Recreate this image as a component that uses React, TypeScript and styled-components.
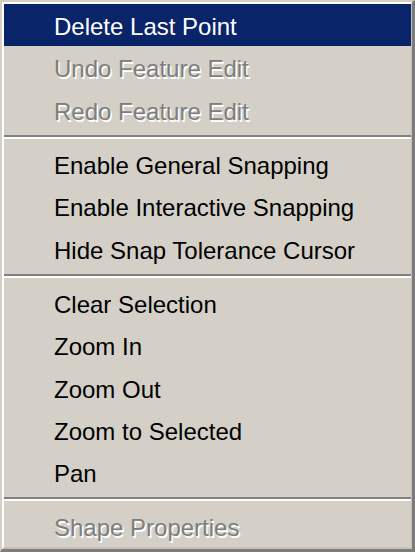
import React from "react";
import styled, { createGlobalStyle } from "styled-components";

const GlobalStyle = createGlobalStyle`
  html, body {
    margin: 0;
    padding: 0;
    background: #d4d0c8;
    overflow: hidden;
  }
`;

const MenuFrame = styled.div`
  width: 415px;
  height: 552px;
  box-sizing: border-box;
  background: #d4d0c8;
  border-style: solid;
  border-width: 2px 3px 3px 2px;
  border-color: #d4d0c8 #7c7c7c #7c7c7c #d4d0c8;
  display: flex;
  font-family: "Liberation Sans", Arial, sans-serif;
`;

const MenuInner = styled.div`
  flex: 1;
  display: flex;
  flex-direction: column;
  border-style: solid;
  border-width: 2px 1px 2px 2px;
  border-color: #ffffff #c4c0b8 #c4c0b8 #ffffff;
`;

const Item = styled.div<{ $active?: boolean; $disabled?: boolean }>`
  height: 42.3px;
  flex: none;
  display: flex;
  align-items: center;
  padding-left: 50px;
  padding-top: 4px;
  box-sizing: border-box;
  font-size: 24px;
  white-space: nowrap;
  background: ${(p) => (p.$active ? "#0a246a" : "transparent")};
  color: ${(p) => (p.$active ? "#ffffff" : p.$disabled ? "#7e7e7e" : "#000000")};
  text-shadow: ${(p) => (p.$disabled ? "1.5px 1.5px 0 #ffffff" : "none")};
`;

const Separator = styled.div`
  height: 12px;
  flex: none;
  display: flex;
  align-items: center;
  &::before {
    content: "";
    flex: 1;
    height: 0;
    border-top: 2px solid #808080;
    border-bottom: 2px solid #ffffff;
  }
`;

type Entry = { label: string; active?: boolean; disabled?: boolean } | "sep";

const entries: Entry[] = [
  { label: "Delete Last Point", active: true },
  { label: "Undo Feature Edit", disabled: true },
  { label: "Redo Feature Edit", disabled: true },
  "sep",
  { label: "Enable General Snapping" },
  { label: "Enable Interactive Snapping" },
  { label: "Hide Snap Tolerance Cursor" },
  "sep",
  { label: "Clear Selection" },
  { label: "Zoom In" },
  { label: "Zoom Out" },
  { label: "Zoom to Selected" },
  { label: "Pan" },
  "sep",
  { label: "Shape Properties", disabled: true },
];

export default function App() {
  return (
    <>
      <GlobalStyle />
      <MenuFrame>
        <MenuInner>
          {entries.map((e, i) =>
            e === "sep" ? (
              <Separator key={i} />
            ) : (
              <Item key={i} $active={e.active} $disabled={e.disabled}>
                {e.label}
              </Item>
            )
          )}
        </MenuInner>
      </MenuFrame>
    </>
  );
}
